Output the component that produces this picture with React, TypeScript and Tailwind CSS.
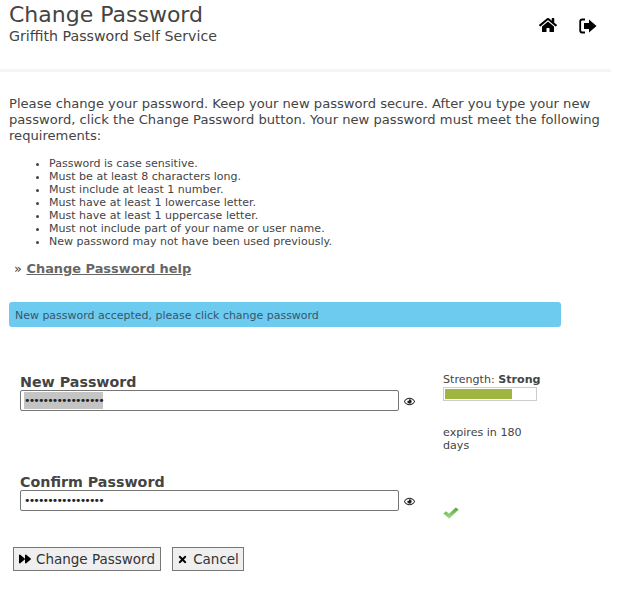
import React from "react";
import { FaHome, FaRegEye, FaForward, FaTimes } from "react-icons/fa";

function Eye() {
  return <FaRegEye className="text-[11px] text-[#222] ml-[5px]" />;
}

function SignOut() {
  return (
    <svg width="18" height="16" viewBox="0 0 18 16" className="mt-[2px]">
      <path d="M6 1.5H3.2Q1.2 1.5 1.2 3.5V12.5Q1.2 14.5 3.2 14.5H6" fill="none" stroke="#000" strokeWidth="1.8" />
      <polygon points="5,5 10,5 10,1.5 17.5,8 10,14.5 10,11 5,11" fill="#000" />
    </svg>
  );
}

function Check() {
  return (
    <svg width="16" height="12" viewBox="0 0 16 12" className="mt-[55px]">
      <defs>
        <linearGradient id="chk" x1="0" y1="0" x2="0" y2="1">
          <stop offset="0" stopColor="#4fa83a" />
          <stop offset="1" stopColor="#a6e08a" />
        </linearGradient>
      </defs>
      <polygon points="0.3,6.5 3,4.3 6,6.8 12.8,0.5 15.7,2.6 6.2,11.7" fill="url(#chk)" />
    </svg>
  );
}

export default function App() {
  const reqs = [
    "Password is case sensitive.",
    "Must be at least 8 characters long.",
    "Must include at least 1 number.",
    "Must have at least 1 lowercase letter.",
    "Must have at least 1 uppercase letter.",
    "Must not include part of your name or user name.",
    "New password may not have been used previously.",
  ];
  return (
    <div className="w-[640px] h-[606px] bg-white overflow-hidden text-[#444] font-['DejaVu_Sans','Liberation_Sans',sans-serif]">
      <header className="w-[611px] h-[72px] border-b-[3px] border-[#f5f5f5] flex justify-between pl-[9px]">
        <div className="pt-[1px]">
          <h1 className="text-[22px] leading-[27px] text-[#444]">Change Password</h1>
          <p className="text-[14.2px] leading-[16px] text-[#444]">Griffith Password Self Service</p>
        </div>
        <div className="flex gap-[22px] pt-[16px] pr-[14px] text-[#000]">
          <FaHome className="text-[18px]" />
          <SignOut />
        </div>
      </header>
      <main className="pl-[9px] w-[611px]">
        <p className="mt-[24px] text-[13.11px] leading-[16px]">
          Please change your password. Keep your new password secure. After you type your new password, click the Change Password button. Your new password must meet the following requirements:
        </p>
        <ul className="mt-[13px] ml-[40px] list-disc text-[11.04px] leading-[13px]">
          {reqs.map((r) => <li key={r}>{r}</li>)}
        </ul>
        <p className="mt-[13px] ml-[5px] text-[12.92px] leading-[16px]">
          » <a className="ml-[0.5px] font-bold underline text-[#666]">Change Password help</a>
        </p>
        <div className="mt-[25px] w-[552px] h-[25px] rounded-[3px] bg-[#6dcbf0] px-[6px] pt-[1px] text-[10.97px] leading-[25px] text-[#35566b]">
          New password accepted, please click change password
        </div>
        <div className="mt-[42px] pl-[11px] flex">
          <div className="w-[379px]">
            <label className="block text-[14.25px] font-bold leading-[16px] pt-[5px]">New Password</label>
            <div className="h-[21px] border border-[#767676] rounded-[2px] bg-white flex items-center px-[3px]">
              <span className="bg-[#c4c4c4] text-[#222] text-[11px] leading-[17px] h-[17px] tracking-[-1.85px]">•••••••••••••••••</span>
            </div>
            <label className="block text-[14.25px] font-bold leading-[16px] mt-[63px]">Confirm Password</label>
            <div className="h-[21px] border border-[#767676] rounded-[2px] bg-white flex items-center px-[3px]">
              <span className="text-[#222] text-[11px] leading-[17px] h-[17px] tracking-[-1.85px]">•••••••••••••••••</span>
            </div>
          </div>
          <div className="w-[44px] pt-[27px]">
            <Eye />
            <div className="mt-[89px]"><Eye /></div>
          </div>
          <div className="w-[100px] pt-[4px] text-[11.1px] leading-[13px]">
            <div>Strength: <b>Strong</b></div>
            <div className="mt-[1px] w-[94px] h-[14px] border border-[#ccc] p-[1px]">
              <div className="h-full w-[74%] bg-[#9eb53f]" />
            </div>
            <p className="mt-[25px]">expires in 180 days</p>
            <Check />
          </div>
        </div>
        <div className="mt-[28px] ml-[4px] flex gap-[11px] text-[13.5px]">
          <button className="h-[24px] w-[148px] border border-[#777] bg-[#efefef] flex items-center justify-center gap-[5px] text-[#333]">
            <FaForward className="text-[12px] text-black" />Change Password
          </button>
          <button className="h-[24px] w-[72px] border border-[#777] bg-[#efefef] flex items-center justify-center gap-[5px] text-[#333]">
            <FaTimes className="text-[11px] text-black" />Cancel
          </button>
        </div>
      </main>
    </div>
  );
}
